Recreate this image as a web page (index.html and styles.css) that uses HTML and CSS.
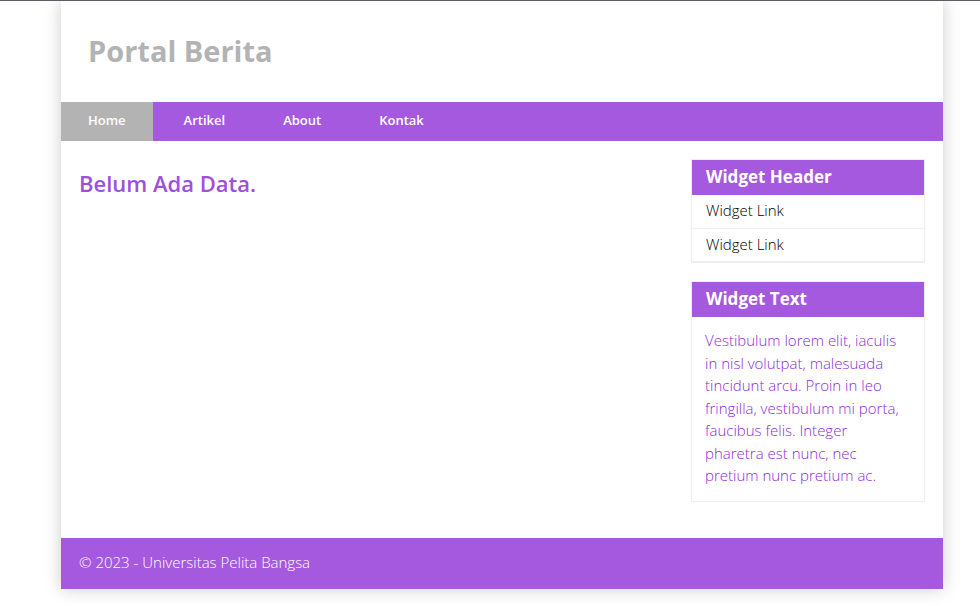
FILE: index.html
```html
<!DOCTYPE html>
<html lang="id">
<head>
<meta charset="utf-8">
<title>Portal Berita</title>
<link rel="stylesheet" href="styles.css">
</head>
<body>
<div class="container">
  <header class="site-header"><h1>Portal Berita</h1></header>
  <nav class="nav">
    <a href="#" class="active">Home</a>
    <a href="#">Artikel</a>
    <a href="#">About</a>
    <a href="#">Kontak</a>
  </nav>
  <div class="wrapper">
    <main class="main"><h2>Belum Ada Data.</h2></main>
    <aside class="sidebar">
      <section class="widget">
        <h3 class="title">Widget Header</h3>
        <ul>
          <li><a href="#">Widget Link</a></li>
          <li><a href="#">Widget Link</a></li>
        </ul>
      </section>
      <section class="widget">
        <h3 class="title">Widget Text</h3>
        <p>Vestibulum lorem elit, iaculis in nisl volutpat, malesuada tincidunt arcu. Proin in leo fringilla, vestibulum mi porta, faucibus felis. Integer pharetra est nunc, nec pretium nunc pretium ac.</p>
      </section>
    </aside>
  </div>
  <footer class="footer"><p>© 2023 - Universitas Pelita Bangsa</p></footer>
</div>
</body>
</html>
```
FILE: styles.css
```css
* {
  box-sizing: border-box;
  margin: 0;
  padding: 0;
}

body {
  border-top: 1px solid #5c5c62;
  background: #fff;
  color: #a459df;
  font-family: "Open Sans", sans-serif;
  font-size: 15px;
  font-weight: 300;
  line-height: 1.5;
}

.container {
  margin: 0 37px 17px 61px;
  box-shadow: 0 0 16px #ccc;
}

.site-header {
  padding: 30px 27px 31px;
}

.site-header h1 {
  color: #b3b3b3;
  font-size: 29px;
  line-height: 40px;
}

.nav {
  display: flex;
  gap: 4px;
  background: #a459df;
}

.nav a {
  padding: 8px 27px 11px;
  color: #fff;
  font-size: 13px;
  font-weight: 600;
  line-height: 20px;
  text-decoration: none;
}

.nav .active {
  background: #b3b3b3;
}

.wrapper {
  display: flex;
  justify-content: space-between;
  padding: 18px;
}

.main h2 {
  margin-top: 9px;
  color: #9f4fdd;
  font-size: 22px;
  font-weight: 600;
  line-height: 30px;
}

.sidebar {
  width: 234px;
}

.widget {
  margin-bottom: 18px;
  border: 1px solid #eee;
}

.title {
  padding: 5px 14px 7px;
  background: #a459df;
  color: #fff;
  font-size: 17px;
  line-height: 23px;
}

.widget ul {
  list-style: none;
}

.widget li {
  border-bottom: 1px solid #eee;
}

.widget li a {
  display: block;
  padding: 4px 14px 6px;
  color: #000;
  text-decoration: none;
}

.widget p {
  padding: 12px 20px 14px 13px;
  color: #8f2bd8;
}

.footer {
  padding: 13px 18px 16px;
  background: #a459df;
  color: #fff;
}
```
